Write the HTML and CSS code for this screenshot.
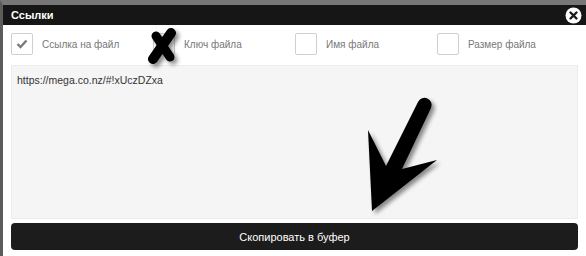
FILE: index.html
```html
<!DOCTYPE html>
<html>
<head>
  <meta charset="UTF-8">
  <title>Ссылки</title>
  <link rel="stylesheet" href="styles.css">
</head>
<body>
  <div class="dialog">
    <div class="dialog-header">
      <span class="dialog-title">Ссылки</span>
      <span class="close-btn">
        <svg width="17" height="17" viewBox="0 0 17 17">
          <circle cx="8.5" cy="8.5" r="8" fill="#fff"/>
          <path d="M5.5 5.5 L11.5 11.5 M11.5 5.5 L5.5 11.5" stroke="#1a1a1a" stroke-width="2.4" stroke-linecap="round"/>
        </svg>
      </span>
    </div>

    <div class="dialog-body">
      <!-- что включать в ссылку -->
      <div class="options">
        <label class="option">
          <span class="checkbox checked">
            <svg width="12" height="10" viewBox="0 0 12 10">
              <path d="M1.5 5 L4.5 8 L10.5 1.5" fill="none" stroke="#7a7a7a" stroke-width="2.4"/>
            </svg>
          </span>
          <span class="option-label">Ссылка на файл</span>
        </label>
        <label class="option">
          <span class="checkbox"></span>
          <span class="option-label">Ключ файла</span>
        </label>
        <label class="option">
          <span class="checkbox"></span>
          <span class="option-label">Имя файла</span>
        </label>
        <label class="option">
          <span class="checkbox"></span>
          <span class="option-label">Размер файла</span>
        </label>
      </div>

      <div class="links-box">https://mega.co.nz/#!xUczDZxa</div>

      <button class="copy-btn">Скопировать в буфер</button>
    </div>
  </div>

  <!-- пометки поверх скриншота -->
  <svg class="marks" width="586" height="256" viewBox="0 0 586 256">
    <g class="mark-shadow">
      <path d="M171 33 L153 59" stroke="#000" stroke-width="10" stroke-linecap="round"/>
      <path d="M156 36 L170 57" stroke="#000" stroke-width="9" stroke-linecap="round"/>
      <path d="M372 211 L368 130 L386 166 L418 102 A7 7 0 0 1 431 108 L402 169 L437 160 Z" fill="#000"/>
    </g>
  </svg>
</body>
</html>
```

FILE: styles.css
```css
body {
  margin: 0;
  width: 586px;
  height: 256px;
  overflow: hidden;
  background-color: #fff;
  font-family: "Liberation Sans", Arial, sans-serif;
  position: relative;
}

.dialog {
  height: 251px;
  border-top: 5px solid #777;
  border-left: 3px solid #5c5c5c;
  background-color: #fff;
}

.dialog-header {
  height: 20px;
  background-color: #161616;
  display: flex;
  align-items: center;
  justify-content: space-between;
  padding: 0 4px 0 8px;
}

.dialog-title {
  color: #fff;
  font-size: 11px;
  font-weight: bold;
}

.close-btn {
  display: flex;
}

.dialog-body {
  padding: 8px 8px 0 8px;
  width: 567px;
}

.options {
  display: grid;
  grid-template-columns: repeat(4, 142px);
  height: 22px;
}

.option {
  display: flex;
  align-items: center;
  gap: 9px;
}

.checkbox {
  width: 20px;
  height: 20px;
  border: 1px solid #cfcfcf;
  border-radius: 2px;
  background-color: #fff;
  display: flex;
  align-items: center;
  justify-content: center;
  flex-shrink: 0;
}

.option-label {
  font-size: 10px;
  color: #777;
}

.links-box {
  margin-top: 10px;
  height: 140px;
  padding: 8px 5px 4px 5px;
  border: 1px solid #ececec;
  background-color: #f5f5f5;
  font-size: 10.5px;
  color: #333;
}

.copy-btn {
  display: block;
  width: 100%;
  height: 27px;
  margin-top: 4px;
  border: none;
  border-radius: 4px;
  background-color: #1c1c1c;
  color: #fff;
  font-family: "Liberation Sans", Arial, sans-serif;
  font-size: 11px;
  cursor: pointer;
}

.marks {
  position: absolute;
  top: 0;
  left: 0;
  pointer-events: none;
}

.mark-shadow {
  filter: drop-shadow(3px 3px 2px rgba(0,0,0,0.45));
}
```
